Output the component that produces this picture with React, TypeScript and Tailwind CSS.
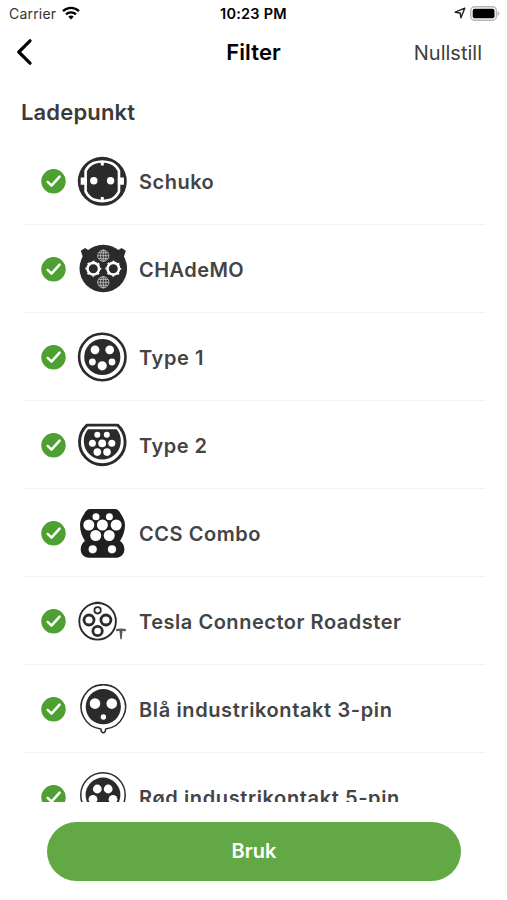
import type { ReactNode } from "react";
import { useState } from "react";

const DARK = "#2b2b2d";

type Hole = [x: number, y: number, r: number];

function Holes({ items }: { items: Hole[] }) {
  return (
    <g fill="#fff">
      {items.map(([x, y, r]) => (
        <circle key={`${x}-${y}`} cx={x} cy={y} r={r} />
      ))}
    </g>
  );
}

function PlugIcon({ children }: { children: ReactNode }) {
  return (
    <svg viewBox="0 0 50 50" className="h-[50px] w-[50px] shrink-0" fill="none" aria-hidden="true">
      {children}
    </svg>
  );
}

function Schuko() {
  return (
    <PlugIcon>
      <circle cx="25.3" cy="25.3" r="24.5" fill={DARK} />
      <path
        d="M16.6 7Q25.3 4 34 7Q39.5 9.6 42 15V35.4Q39.5 41 34 43.6Q25.3 46.6 16.6 43.6Q11.1 41 8.6 35.4V15Q11.1 9.6 16.6 7Z"
        stroke="#fff"
        strokeWidth="2.6"
        strokeLinejoin="round"
      />
      <path d="M3.7 21.4h6v7.4h-6zM40.9 21.4h6v7.4h-6z" fill="#fff" />
      <path d="M23.8 5h3v4.6h-3zM23.8 41h3v4.6h-3z" fill="#fff" />
      <Holes items={[[16.8, 24.8, 3.7], [33.6, 24.8, 3.7]]} />
    </PlugIcon>
  );
}

function Globe({ cy }: { cy: number }) {
  return (
    <g stroke="#c4c4c4" strokeWidth="0.85">
      <circle cx="26.3" cy={cy} r="5.6" />
      <ellipse cx="26.3" cy={cy} rx="2.7" ry="5.6" />
      <path d={`M26.3 ${cy - 5.6}v11.2M20.7 ${cy}h11.2M21.7 ${cy - 2.9}h9.2M21.7 ${cy + 2.9}h9.2`} />
    </g>
  );
}

function Chademo() {
  return (
    <PlugIcon>
      <path d="M3.8 6.8L8 4L12 6.5L14 9L6.5 15ZM48.8 6.8L44.6 4L40.6 6.5L38.6 9L46.1 15Z" fill={DARK} />
      <circle cx="26.3" cy="24.5" r="23.8" fill={DARK} />
      {[16.3, 36.3].map((cx) => (
        <g key={cx} stroke="#fff">
          <circle cx={cx} cy="24.7" r="5.8" strokeWidth="2.6" />
          <circle cx={cx} cy="24.7" r="7.3" strokeWidth="1.3" strokeDasharray="2 3.733" strokeDashoffset="1" />
        </g>
      ))}
      <Globe cy={11.7} />
      <Globe cy={38.3} />
    </PlugIcon>
  );
}

function Type1() {
  return (
    <PlugIcon>
      <circle cx="25.3" cy="25" r="23.2" stroke={DARK} strokeWidth="2.6" />
      <circle cx="25.3" cy="25" r="18.1" fill={DARK} />
      <Holes items={[[18, 17.8, 4.4], [32.7, 17.8, 4.4], [15.4, 30, 3.4], [35, 30, 3.4], [25.2, 33.8, 4.6]]} />
    </PlugIcon>
  );
}

function Type2() {
  return (
    <PlugIcon>
      <path d="M10 5.1H40.6A22.8 22.8 0 1 1 10 5.1Z" stroke={DARK} strokeWidth="2.9" strokeLinejoin="round" />
      <path d="M11 9.2H39.6A18.5 18.5 0 1 1 11 9.2Z" fill={DARK} />
      <Holes
        items={[
          [20.3, 14.8, 3],
          [29.8, 14.8, 3],
          [15.4, 23.3, 3.5],
          [25.2, 23.3, 3.9],
          [34.8, 23.3, 3.5],
          [20.3, 32.1, 3.8],
          [30, 32.1, 3.8],
        ]}
      />
    </PlugIcon>
  );
}

function CcsCombo() {
  return (
    <PlugIcon>
      <path
        d="M13 1H38C40.5 1 42 2.6 43.6 5.5C46 9.2 48 12.6 48 17C48 23.5 45.8 28.5 43 33C45.8 34.7 47.4 37.6 47.4 41.3C47.4 46.2 44 49.7 39.3 49.7H11.8C7 49.7 3.7 46.2 3.7 41.3C3.7 37.6 5.3 34.7 8 33C5 28.5 3 23.5 3 17C3 12.6 5 9.2 7.4 5.5C9 2.6 10.5 1 13 1Z"
        fill="#201e20"
      />
      <Holes
        items={[
          [19, 8.7, 3.5],
          [32.4, 8.7, 3.5],
          [11.8, 17, 5.5],
          [25.4, 17, 5.5],
          [39.2, 17, 5.5],
          [18.7, 27.5, 5.5],
          [32.2, 27.5, 5.5],
          [15.7, 41.3, 4.1],
          [35, 41.3, 4.1],
        ]}
      />
    </PlugIcon>
  );
}

function TeslaRoadster() {
  return (
    <PlugIcon>
      <g stroke={DARK}>
        <circle cx="20.6" cy="25.3" r="18.3" strokeWidth="1.9" />
        <path d="M18.2 6.6h4.8" strokeWidth="1.8" />
        <circle cx="20.6" cy="14.3" r="3.2" strokeWidth="1.8" />
        <circle cx="12" cy="24" r="5" strokeWidth="2.8" />
        <circle cx="28.9" cy="24" r="5" strokeWidth="2.8" />
        <circle cx="20.6" cy="35" r="4.7" strokeWidth="2.8" />
      </g>
      <path d="M38.8 33.2Q44 32 49.2 33.2L48.6 35.2L45.5 34.9L44.7 43.3H43.3L42.5 34.9L39.4 35.2Z" fill="#58585a" />
    </PlugIcon>
  );
}

function BlueIndustrial() {
  return (
    <PlugIcon>
      <path
        d="M28.7 44.9A22.2 22.2 0 1 0 23.9 44.9L24.4 47.5Q26.3 50 28.2 47.5Z"
        stroke={DARK}
        strokeWidth="1.5"
        strokeLinejoin="round"
      />
      <circle cx="26.3" cy="22.7" r="17.6" fill={DARK} />
      <Holes items={[[18, 19.6, 5.3], [34.8, 19.6, 5.3], [26.4, 33, 2.7]]} />
    </PlugIcon>
  );
}

function RedIndustrial() {
  return (
    <PlugIcon>
      <circle cx="26" cy="23" r="22.2" stroke={DARK} strokeWidth="1.5" />
      <circle cx="26" cy="23" r="17.4" fill={DARK} />
      <Holes items={[[20.3, 17, 4.4], [31.2, 17, 4.4], [16, 27.3, 4.4], [36, 27.3, 4.4], [26, 34, 4]]} />
    </PlugIcon>
  );
}

const connectors = [
  { label: "Schuko", icon: Schuko, tracking: "tracking-[0.5px]" },
  { label: "CHAdeMO", icon: Chademo, tracking: "tracking-[0.45px]" },
  { label: "Type 1", icon: Type1, tracking: "tracking-[0.6px]" },
  { label: "Type 2", icon: Type2, tracking: "tracking-[0.5px]" },
  { label: "CCS Combo", icon: CcsCombo, tracking: "tracking-[0.55px]" },
  { label: "Tesla Connector Roadster", icon: TeslaRoadster, tracking: "tracking-[0.53px]" },
  { label: "Blå industrikontakt 3-pin", icon: BlueIndustrial, tracking: "tracking-[0.62px]" },
  { label: "Rød industrikontakt 5-pin", icon: RedIndustrial, tracking: "tracking-[0.62px]" },
];

function StatusBar() {
  return (
    <div className="grid h-7 shrink-0 grid-cols-3 items-center px-[9px] text-sm leading-none text-black">
      <div className="flex items-center gap-1.5">
        <span className="tracking-[0.2px] text-[#333]">Carrier</span>
        <svg viewBox="0 0 18 14" className="-mt-0.5 h-3.5 w-[18px]" fill="none" stroke="#000" strokeWidth="2.3">
          <path d="M1 5.2a11.5 11.5 0 0 1 16 0M4 8.4a7.2 7.2 0 0 1 10 0" />
          <path d="M9 13.5L6.3 10.8a3.9 3.9 0 0 1 5.4 0Z" fill="#000" stroke="none" />
        </svg>
      </div>
      <span className="text-center text-[14.5px] font-semibold tracking-[0.25px]">10:23 PM</span>
      <div className="-mr-0.5 flex items-center justify-end gap-1">
        <svg viewBox="0 0 12 12" className="-mt-0.5 h-3 w-3" fill="none" stroke="#222" strokeWidth="1.4" strokeLinejoin="round">
          <path d="M10.8 1.2L1.2 5.2L6.2 6L6.9 10.8Z" />
        </svg>
        <svg viewBox="0 0 30 15" className="-mt-0.5 h-[15px] w-[30px]">
          <rect x="0.8" y="0.8" width="25.6" height="13.4" rx="4" fill="#fff" stroke="#b5b5b5" strokeWidth="1.4" />
          <rect x="2.7" y="2.7" width="21.8" height="9.6" rx="2" fill="#000" />
          <path d="M27.7 5a2.7 2.7 0 0 1 0 5Z" fill="#b5b5b5" />
        </svg>
      </div>
    </div>
  );
}

export default function App() {
  const [selected, setSelected] = useState(() => connectors.map((c) => c.label));

  const toggle = (label: string) =>
    setSelected((prev) => (prev.includes(label) ? prev.filter((l) => l !== label) : [...prev, label]));

  return (
    <div className="flex h-[900px] w-[507px] flex-col overflow-hidden bg-white font-[Inter,'Liberation_Sans',sans-serif]">
      <StatusBar />

      <header className="grid h-12 shrink-0 grid-cols-[1fr_auto_1fr] items-center pr-[25px] pl-[25px]">
        <button aria-label="Tilbake" className="-ml-[9px] w-fit">
          <svg viewBox="0 0 16 26" className="h-[26px] w-4" fill="none" stroke="#000" strokeWidth="3.2">
            <path d="M14 1.8L2.8 13L14 24.2" strokeLinecap="round" strokeLinejoin="round" />
          </svg>
        </button>
        <h1 className="text-center text-[22px] font-semibold tracking-[0.1px] text-black">Filter</h1>
        <button className="justify-self-end pt-px text-xl text-[#404040]" onClick={() => setSelected([])}>
          Nullstill
        </button>
      </header>

      <h2 className="mt-5 h-[41px] shrink-0 pl-[21px] text-[22px] leading-8 font-semibold tracking-[0.15px] text-[#3b3b3b]">
        Ladepunkt
      </h2>

      <ul className="h-[665px] shrink-0 overflow-hidden pr-[22px] pl-[23px]">
        {connectors.map(({ label, icon: Icon, tracking }) => (
          <li key={label} className="h-[88px] border-b border-[#f3f3f3]">
            <button className="flex h-full w-full items-center pt-px pl-[18px] text-left" onClick={() => toggle(label)}>
              <svg viewBox="0 0 25 25" className="mr-[11px] h-[25px] w-[25px] shrink-0" fill="none">
                <circle cx="12.5" cy="12.3" r="12.2" fill={selected.includes(label) ? "#4ea033" : "#d4d4d4"} />
                <path d="M6.7 12.9L10.5 16.7L18.6 7.7" stroke="#fff" strokeWidth="2.5" strokeLinecap="round" strokeLinejoin="round" />
              </svg>
              <Icon />
              <span className={`ml-3 pt-px text-xl font-semibold whitespace-nowrap text-[#444] ${tracking}`}>{label}</span>
            </button>
          </li>
        ))}
      </ul>

      <div className="mt-5 pr-[46px] pl-[47px]">
        <button className="h-[58.5px] w-full rounded-full bg-[#62a844] text-xl font-semibold text-white">Bruk</button>
      </div>
    </div>
  );
}
